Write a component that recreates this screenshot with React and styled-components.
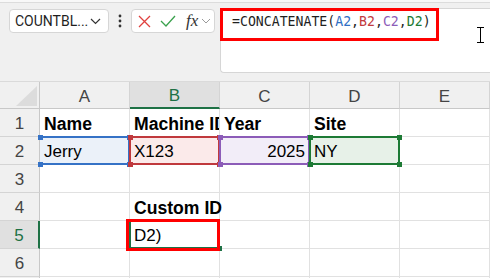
import React from 'react';
import styled, { createGlobalStyle } from 'styled-components';

const GlobalStyle = createGlobalStyle`
  html, body {
    margin: 0;
    padding: 0;
    background: #ffffff;
    overflow: hidden;
  }
`;

// Colours used for the formula's reference ranges
const refColors = {
  blue: { line: '#3572c6', fill: '#ebf1f9' },
  red: { line: '#c0393d', fill: '#fbeaea' },
  purple: { line: '#8c5cb8', fill: '#f2edf8' },
  green: { line: '#1d7a35', fill: '#e7f1e8' },
};

const excelGreen = '#1e7145';

const Window = styled.div`
  width: 490px;
  height: 278px;
  overflow: hidden;
  display: flex;
  flex-direction: column;
  background: #ffffff;
`;

const TopEdge = styled.div`
  height: 2px;
  flex: none;
  background: #f8f8f8;
  border-bottom: 1px solid #dcdcdc;
`;

const FormulaArea = styled.div`
  flex: none;
  height: 78px;
  box-sizing: border-box;
  padding: 5px 0 0 9px;
  background: #f0f0f0;
  display: flex;
  align-items: flex-start;
`;

const NameBox = styled.div`
  width: 100px;
  height: 24px;
  margin-top: 1px;
  box-sizing: border-box;
  padding: 0 7px 0 5px;
  background: #ffffff;
  border: 1px solid #d6d6d6;
  border-radius: 4px;
  display: flex;
  align-items: center;
  justify-content: space-between;
  font: 14px/16px Roboto, "Liberation Sans", sans-serif;
  color: #1f1f1f;
`;

const Dots = styled.div`
  width: 22px;
  height: 26px;
  display: flex;
  align-items: center;
  justify-content: center;
`;

const FxBox = styled.div`
  width: 84px;
  height: 24px;
  margin-top: 1px;
  box-sizing: border-box;
  padding: 0 0 0 6px;
  background: #ffffff;
  border: 1px solid #d6d6d6;
  border-radius: 4px;
  display: flex;
  align-items: center;
  gap: 9px;
`;

const FxLabel = styled.span`
  font: italic 17px/18px "Liberation Serif", "DejaVu Serif", serif;
  color: #333333;
  margin-left: 1px;
  margin-right: -6px;
`;

const FormulaInput = styled.div`
  position: relative;
  flex: 1;
  height: 65px;
  margin-left: 5px;
  box-sizing: border-box;
  padding: 5px 0 0 11px;
  background: #ffffff;
  border: 1px solid #d6d6d6;
  border-right: none;
  border-radius: 4px 0 0 4px;
  font: 13.2px/16px "DejaVu Sans Mono", "Liberation Mono", monospace;
  color: #1f1f1f;
  white-space: nowrap;
`;

const Token = styled.span`
  color: ${(p) => p.$color || '#1f1f1f'};
`;

// drawn annotation frame laid over the screenshot
const Annotation = styled.div`
  position: absolute;
  box-sizing: border-box;
  border: 3px solid #ff0000;
  pointer-events: none;
  z-index: 5;
`;

const Cursor = styled.svg`
  position: absolute;
  left: 256px;
  top: 18px;
`;

const Grid = styled.div`
  display: grid;
  grid-template-columns: 40px repeat(5, 90px);
  grid-auto-rows: 28px;
  grid-template-rows: 27px;
  border-top: 1px solid #dadada;
  background: #ffffff;
`;

const Corner = styled.div`
  position: relative;
  box-sizing: border-box;
  background: #f0f0f0;
  border-right: 1px solid #c8c8c8;
  border-bottom: 1px solid #c8c8c8;
`;

const CornerTriangle = styled.svg`
  position: absolute;
  right: 2px;
  bottom: 2px;
`;

const ColHeader = styled.div`
  box-sizing: border-box;
  display: flex;
  align-items: flex-end;
  justify-content: center;
  padding-bottom: 1px;
  background: ${(p) => (p.$active ? '#e0e0e0' : '#f0f0f0')};
  border-right: 1px solid #d4d4d4;
  border-bottom: ${(p) => (p.$active ? `2px solid ${excelGreen}` : '1px solid #c8c8c8')};
  font: 17px/20px "Liberation Sans", Arial, sans-serif;
  color: ${(p) => (p.$active ? excelGreen : '#444444')};
`;

const RowHeader = styled.div`
  box-sizing: border-box;
  display: flex;
  align-items: flex-end;
  justify-content: center;
  padding-bottom: 2px;
  background: ${(p) => (p.$active ? '#e0e0e0' : '#f0f0f0')};
  border-right: ${(p) => (p.$active ? `2px solid ${excelGreen}` : '1px solid #c8c8c8')};
  border-bottom: 1px solid #d4d4d4;
  font: 17px/20px "Liberation Sans", Arial, sans-serif;
  color: ${(p) => (p.$active ? excelGreen : '#444444')};
`;

const Cell = styled.div`
  position: relative;
  box-sizing: border-box;
  display: flex;
  align-items: flex-end;
  justify-content: ${(p) => (p.$align === 'right' ? 'flex-end' : 'flex-start')};
  padding: 0 4px 2px;
  border-right: 1px solid #e1e1e1;
  border-bottom: 1px solid #e1e1e1;
  background: ${(p) => p.$fill || 'transparent'};
  font: ${(p) => (p.$bold ? '700 17.6px' : '400 17px')}/20px "Liberation Sans", Arial, sans-serif;
  color: #000000;
  white-space: nowrap;
  overflow: ${(p) => (p.$clip ? 'hidden' : 'visible')};
`;

const RefFrame = styled.div`
  position: absolute;
  inset: -1px;
  border: 2px solid ${(p) => p.$color};
  border-left-color: ${(p) => (p.$openLeft ? 'transparent' : p.$color)};
  pointer-events: none;
  z-index: 2;
`;

const Handle = styled.span`
  position: absolute;
  width: 5px;
  height: 5px;
  background: ${(p) => p.$color};
  ${(p) => (p.$v === 'top' ? 'top: -3.5px;' : 'bottom: -3.5px;')}
  ${(p) => (p.$h === 'left' ? 'left: -3.5px;' : 'right: -3.5px;')}
`;

const columns = ['A', 'B', 'C', 'D', 'E'];

const rows = [
  {
    n: 1,
    cells: {
      A: { text: 'Name', bold: true },
      B: { text: 'Machine ID', bold: true, clip: true },
      C: { text: 'Year', bold: true },
      D: { text: 'Site', bold: true },
    },
  },
  {
    n: 2,
    cells: {
      A: { text: 'Jerry', ref: 'blue', openLeft: true },
      B: { text: 'X123', ref: 'red' },
      C: { text: '2025', ref: 'purple', align: 'right' },
      D: { text: 'NY', ref: 'green' },
    },
  },
  { n: 3, cells: {} },
  { n: 4, cells: { B: { text: 'Custom ID', bold: true } } },
  { n: 5, active: true, cells: { B: { text: 'D2)', active: true } } },
  { n: 6, cells: {} },
  { n: 7, cells: {} },
];

const formula = [
  { t: '=CONCATENATE(' },
  { t: 'A2', c: '#2f6fc4' },
  { t: ',' },
  { t: 'B2', c: '#c23a3e' },
  { t: ',' },
  { t: 'C2', c: '#8c5cb8' },
  { t: ',' },
  { t: 'D2', c: '#1d7a35' },
  { t: ')' },
];

const Corners = ({ color }) => (
  <>
    <Handle $color={color} $v="top" $h="left" />
    <Handle $color={color} $v="top" $h="right" />
    <Handle $color={color} $v="bottom" $h="left" />
    <Handle $color={color} $v="bottom" $h="right" />
  </>
);

const SheetCell = ({ cell }) => {
  if (!cell) return <Cell />;
  const ref = cell.ref ? refColors[cell.ref] : null;
  return (
    <Cell $bold={cell.bold} $clip={cell.clip} $align={cell.align} $fill={ref && ref.fill}>
      {cell.text}
      {ref && (
        <RefFrame $color={ref.line} $openLeft={cell.openLeft}>
          <Corners color={ref.line} />
        </RefFrame>
      )}
      {cell.active && (
        <>
          <RefFrame $color={excelGreen}>
            <Handle $color={excelGreen} $v="bottom" $h="right" />
          </RefFrame>
          <Annotation style={{ left: -4, top: -2, right: -1, bottom: -3 }} />
        </>
      )}
    </Cell>
  );
};

const App = () => {
  return (
    <Window>
      <GlobalStyle />
      <TopEdge />
      <FormulaArea>
        <NameBox>
          <span>COUNTBL...</span>
          <svg width="11" height="7" viewBox="0 0 11 7">
            <path d="M1 1 L5.5 5.5 L10 1" fill="none" stroke="#333" strokeWidth="1.2" />
          </svg>
        </NameBox>
        <Dots>
          <svg width="4" height="14" viewBox="0 0 4 14">
            <circle cx="2" cy="2" r="1.4" fill="#333" />
            <circle cx="2" cy="7" r="1.4" fill="#333" />
            <circle cx="2" cy="12" r="1.4" fill="#333" />
          </svg>
        </Dots>
        <FxBox>
          <svg width="13" height="13" viewBox="0 0 13 13">
            <path d="M1 1 L12 12 M12 1 L1 12" stroke="#e0413f" strokeWidth="1.3" fill="none" />
          </svg>
          <svg width="16" height="12" viewBox="0 0 16 12">
            <path d="M1 6 L6 11 L15 1" stroke="#3aa14d" strokeWidth="1.3" fill="none" />
          </svg>
          <FxLabel>fx</FxLabel>
          <svg width="10" height="6" viewBox="0 0 10 6">
            <path d="M1 1 L5 5 L9 1" fill="none" stroke="#9a9a9a" strokeWidth="1" />
          </svg>
        </FxBox>
        <FormulaInput>
          {formula.map((tok, i) => (
            <Token key={i} $color={tok.c}>
              {tok.t}
            </Token>
          ))}
          <Annotation style={{ left: -1, top: -1, width: 219, height: 33 }} />
          <Cursor width="7" height="16" viewBox="0 0 7 16">
            <path d="M0 0.5 H7 M3.5 0.5 V15.5 M0 15.5 H7" stroke="#000" strokeWidth="1" fill="none" />
          </Cursor>
        </FormulaInput>
      </FormulaArea>
      <Grid>
        <Corner>
          <CornerTriangle width="21" height="20" viewBox="0 0 21 20">
            <path d="M0 20 L21 20 L21 0 Z" fill="#dcdcdc" />
          </CornerTriangle>
        </Corner>
        {columns.map((col) => (
          <ColHeader key={col} $active={col === 'B'}>
            {col}
          </ColHeader>
        ))}
        {rows.map((row) => (
          <React.Fragment key={row.n}>
            <RowHeader $active={row.active}>{row.n}</RowHeader>
            {columns.map((col) => (
              <SheetCell key={col} cell={row.cells[col]} />
            ))}
          </React.Fragment>
        ))}
      </Grid>
    </Window>
  );
};

export default App;
